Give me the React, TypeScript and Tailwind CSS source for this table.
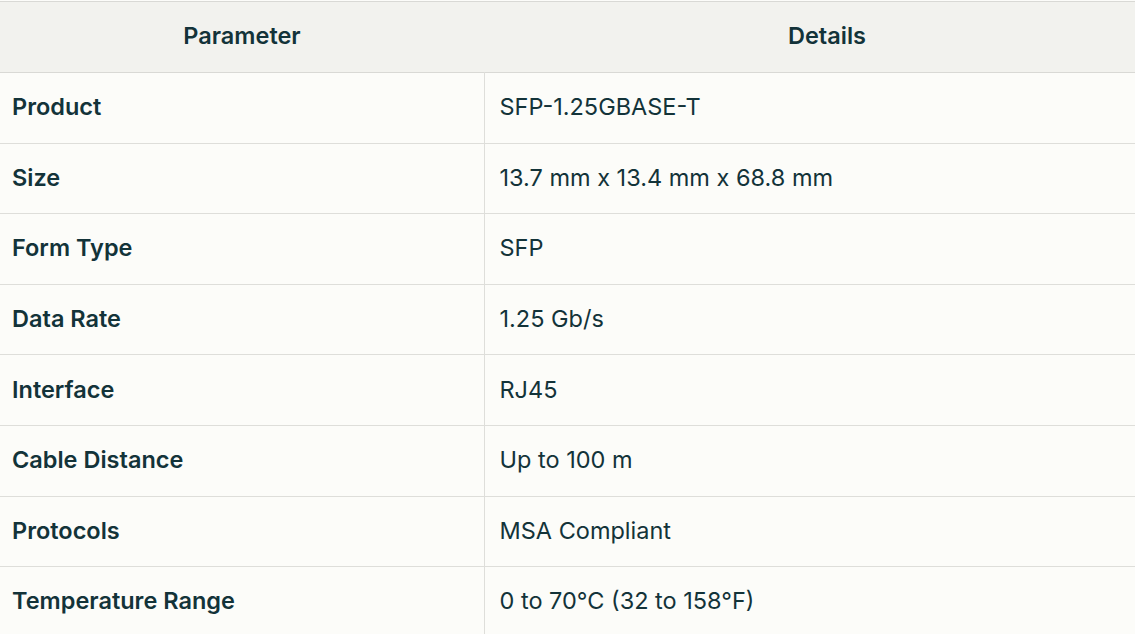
const rows: [string, string][] = [
  ["Product", "SFP-1.25GBASE-T"],
  ["Size", "13.7 mm x 13.4 mm x 68.8 mm"],
  ["Form Type", "SFP"],
  ["Data Rate", "1.25 Gb/s"],
  ["Interface", "RJ45"],
  ["Cable Distance", "Up to 100 m"],
  ["Protocols", "MSA Compliant"],
  ["Temperature Range", "0 to 70°C (32 to 158°F)"],
]

export default function App() {
  return (
    <div className="h-[634px] w-[1135px] overflow-hidden bg-[#fcfcf9] pt-px font-['Inter',sans-serif] text-[#133339]">
      <table className="w-[1170px] table-fixed border-collapse text-[23.5px]">
        <colgroup>
          <col className="w-[484px]" />
          <col />
        </colgroup>
        <thead>
          <tr className="h-[71px] border-y border-[#d9d9d5] bg-[#f2f2ee]">
            <th className="px-3 pb-0.5 text-center font-semibold">Parameter</th>
            <th className="px-3 pb-0.5 text-center font-semibold">Details</th>
          </tr>
        </thead>
        <tbody>
          {rows.map(([name, value]) => (
            <tr key={name} className="h-[70.6px] border-b border-[#dededa]">
              <td className="px-3 pb-0.5 font-semibold">{name}</td>
              <td className="border-l border-[#dededa] pb-0.5 pl-[15px] pr-3">{value}</td>
            </tr>
          ))}
        </tbody>
      </table>
    </div>
  )
}
